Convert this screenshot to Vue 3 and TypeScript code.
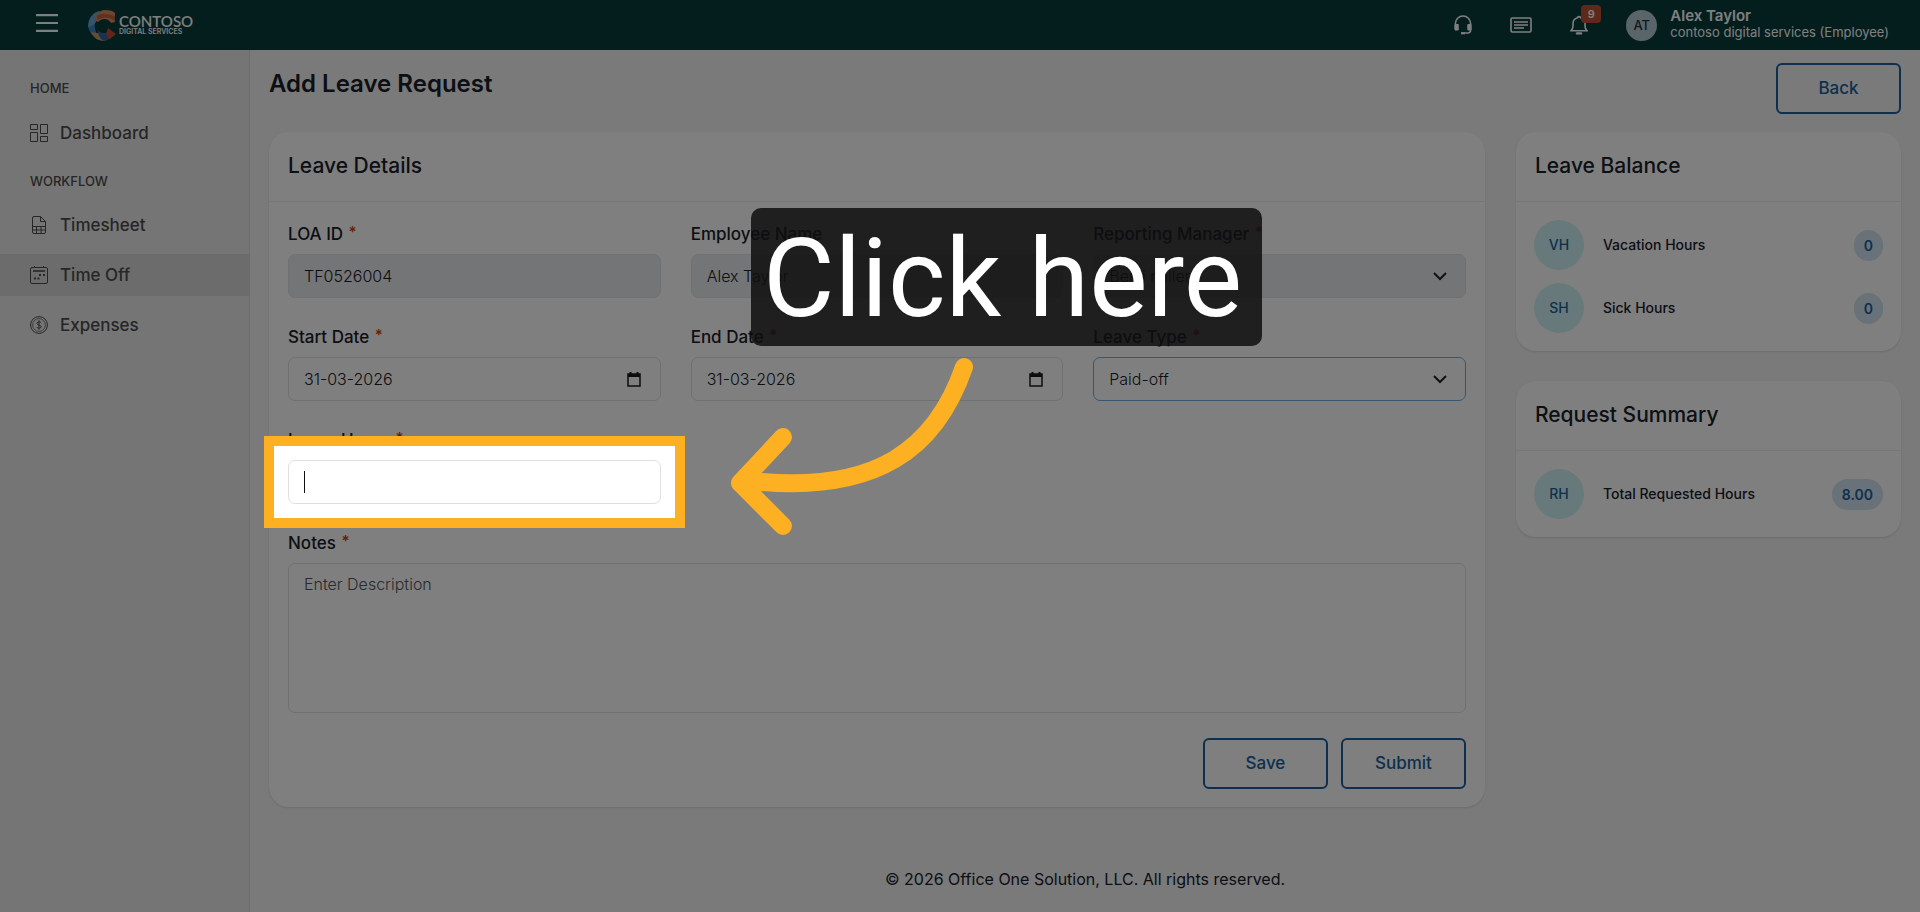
<script setup lang="ts">
import { ref } from 'vue'

interface BalanceRow {
  initials: string
  label: string
  value: string
}

interface SummaryCard {
  title: string
  rows: BalanceRow[]
}

const loaId = ref('TF0526004')
const employee = ref('Alex Taylor')
const startDate = ref('31-03-2026')
const endDate = ref('31-03-2026')
const leaveHours = ref('')
const notes = ref('')

const cards: SummaryCard[] = [
  {
    title: 'Leave Balance',
    rows: [
      { initials: 'VH', label: 'Vacation Hours', value: '0' },
      { initials: 'SH', label: 'Sick Hours', value: '0' },
    ],
  },
  {
    title: 'Request Summary',
    rows: [{ initials: 'RH', label: 'Total Requested Hours', value: '8.00' }],
  },
]
</script>

<template>
  <div class="page">
    <header class="topbar">
      <button class="icon-btn menu" type="button" aria-label="Toggle menu">
        <svg width="22" height="18" viewBox="0 0 22 18"><path d="M0 1.2h22M0 9h22M0 16.8h22" stroke="#fff" stroke-width="2.2" /></svg>
      </button>
      <a class="brand" href="#">
        <svg width="28" height="31" viewBox="0 0 28 31" aria-hidden="true">
          <path d="M12 1C3 3 0 10 0 16c1 6 4 9 8 12 2-2 1-4 0-6-2-6-1-9 0-12 0-4 2-7 4-9z" fill="#3f86c4" />
          <path d="M1 12C3 5 7 2 12 1 9 4 7 8 8 12c-2 3-4 4-8 5z" fill="#6fa5d2" />
          <path d="M8 11C7 5 11 0 17 0c5 0 8 1 10 3v9l-4 1c-3-5-9-5-13-1z" fill="#d98c5f" />
          <path d="M9 6c4-4 11-2 18 0v5c-6-5-12-4-18-1z" fill="#bf6240" />
          <path d="M3 22c6 1 9 2 15 1l4 5-5 3C11 31 6 29 3 22z" fill="#c99874" />
          <path d="M10 20c3 4 7 4 11 1l1 8-6 2c-4-2-6-6-6-11z" fill="#39639e" />
          <path d="M20 18l8 6-6 5-4-4z" fill="#c64b32" />
        </svg>
        <span class="brand-text">
          <span class="brand-name">CONTOSO</span>
          <span class="brand-sub">DIGITAL SERVICES</span>
        </span>
      </a>
      <div class="top-actions">
        <button class="icon-btn" type="button" aria-label="Support">
          <svg width="18" height="20" viewBox="0 0 18 20" fill="none" stroke="#fff" stroke-width="1.6">
            <path d="M1.4 14V8.6a7.6 7.6 0 0 1 15.2 0V15c0 2-1 3-3 3h-3" />
            <path d="M1 9.5h3.2V15H1zM13.8 9.5H17V15h-3.2z" fill="#fff" stroke-width="1" />
            <path d="M7 18.2h4" stroke-width="2.2" />
          </svg>
        </button>
        <button class="icon-btn" type="button" aria-label="News">
          <svg width="22" height="16" viewBox="0 0 22 16" fill="none" stroke="#fff" stroke-width="1.6">
            <rect x="1" y="1" width="20" height="14" rx="1.2" />
            <path d="M4 5h14M4 8h14M4 11h10" />
          </svg>
        </button>
        <button class="icon-btn bell" type="button" aria-label="Notifications">
          <svg width="18" height="20" viewBox="0 0 18 20" fill="none" stroke="#fff" stroke-width="1.6">
            <path d="M1 15.8h16c-1.6-1.3-2-2.8-2-5V8.4a6 6 0 0 0-4.4-5.6c-.2-1.6-3-1.6-3.2 0A6 6 0 0 0 3 8.4v2.4c0 2.2-.4 3.7-2 5z" />
            <path d="M7 18.4h4" stroke-width="2.4" stroke-linecap="round" />
          </svg>
          <span class="bell-count">9</span>
        </button>
        <span class="avatar">AT</span>
        <div class="user">
          <strong>Alex Taylor</strong>
          <span>contoso digital services (Employee)</span>
        </div>
      </div>
    </header>

    <div class="body">
      <nav class="sidebar" aria-label="Main">
        <p class="nav-title">HOME</p>
        <a class="nav-item" href="#">
          <svg width="18" height="18" viewBox="0 0 18 18"><path d="M.5.5h7v5h-7zM.5 8.5h7v9h-7zM10.5.5h7v9h-7zM10.5 12.5h7v5h-7z" /></svg>
          Dashboard
        </a>
        <p class="nav-title">WORKFLOW</p>
        <a class="nav-item" href="#">
          <svg width="18" height="18" viewBox="0 0 18 18"><path d="M2.5 2A1.5 1.5 0 0 1 4 .5h6.5l5 5V16a1.5 1.5 0 0 1-1.500 1.500H4A1.500 1.500 0 0 1 2.500 16zM10.500.5v5h5M2.500 10.500h13M2.500 14h13M6.500 10.500v7M11 10.500v7" /></svg>
          Timesheet
        </a>
        <a class="nav-item active" href="#">
          <svg width="18" height="18" viewBox="0 0 18 18">
            <rect x=".5" y="1.5" width="17" height="16" rx="1.5" />
            <path d="M4.5 0v2M13.5 0v2" /><path d="M3 5h12" stroke-width="1.6" />
            <path d="M9 9h2M13 9h2M4 12.5h2M7.5 12.5h2" stroke-width="1.8" />
          </svg>
          Time Off
        </a>
        <a class="nav-item" href="#">
          <svg width="18" height="18" viewBox="0 0 18 18">
            <circle cx="9" cy="9" r="8.4" /><circle cx="9" cy="9" r="6.4" stroke-width=".7" />
            <path d="M11.3 6.9C11 5.6 7 5.3 6.9 7.3 6.800 9.300 11.200 8.700 11.200 10.800 11.200 12.700 7 12.600 6.700 11M9 4.300v9.400" />
          </svg>
          Expenses
        </a>
      </nav>

      <main class="main">
        <div class="title-row">
          <h1>Add Leave Request</h1>
          <button class="btn" type="button">Back</button>
        </div>

        <div class="columns">
          <form class="card" @submit.prevent>
            <h2>Leave Details</h2>
            <div class="card-body">
              <div class="fields">
                <div class="field">
                  <label for="loa">LOA ID <sup>*</sup></label>
                  <div class="control disabled"><input id="loa" v-model="loaId" type="text" disabled /></div>
                </div>
                <div class="field">
                  <label for="emp">Employee Name</label>
                  <div class="control disabled"><input id="emp" v-model="employee" type="text" disabled /></div>
                </div>
                <div class="field">
                  <label for="mgr">Reporting Manager <sup>*</sup></label>
                  <div class="control disabled">
                    <select id="mgr" disabled><option>Benji miller</option></select>
                    <svg class="chevron" width="14" height="9" viewBox="0 0 14 9"><path d="M1 1l6 6 6-6" /></svg>
                  </div>
                </div>
                <div class="field">
                  <label for="start">Start Date <sup>*</sup></label>
                  <div class="control">
                    <input id="start" v-model="startDate" type="text" />
                    <button class="icon-btn" type="button" aria-label="Choose start date">
                      <svg width="14" height="15" viewBox="0 0 14 15"><path d="M1 2h12v12H1z" fill="none" stroke="#1b1b1b" stroke-width="1.5" /><path d="M1 2h12v3H1zM2.5 0h2v2h-2zM9.5 0h2v2h-2z" fill="#1b1b1b" /></svg>
                    </button>
                  </div>
                </div>
                <div class="field">
                  <label for="end">End Date <sup>*</sup></label>
                  <div class="control">
                    <input id="end" v-model="endDate" type="text" />
                    <button class="icon-btn" type="button" aria-label="Choose end date">
                      <svg width="14" height="15" viewBox="0 0 14 15"><path d="M1 2h12v12H1z" fill="none" stroke="#1b1b1b" stroke-width="1.5" /><path d="M1 2h12v3H1zM2.5 0h2v2h-2zM9.5 0h2v2h-2z" fill="#1b1b1b" /></svg>
                    </button>
                  </div>
                </div>
                <div class="field">
                  <label for="type">Leave Type <sup>*</sup></label>
                  <div class="control selected">
                    <select id="type"><option>Paid-off</option></select>
                    <svg class="chevron" width="14" height="9" viewBox="0 0 14 9"><path d="M1 1l6 6 6-6" /></svg>
                  </div>
                </div>
                <div class="field">
                  <label for="hours">Leave Hours <sup>*</sup></label>
                  <div class="control">
                    <span class="caret"></span>
                    <input id="hours" v-model="leaveHours" type="text" />
                    <div class="spotlight"></div>
                    <div class="callout">Click here</div>
                    <svg class="arrow" width="246" height="180" viewBox="0 0 246 180" aria-hidden="true">
                      <path d="M234 11C205 95 145 135 32 126L10 127M53 81L10 127 53 170" />
                    </svg>
                  </div>
                </div>
                <div class="field wide">
                  <label for="notes">Notes <sup>*</sup></label>
                  <textarea id="notes" v-model="notes" placeholder="Enter Description"></textarea>
                </div>
              </div>
              <div class="form-actions">
                <button class="btn" type="button">Save</button>
                <button class="btn" type="submit">Submit</button>
              </div>
            </div>
          </form>

          <aside class="side">
            <section v-for="card in cards" :key="card.title" class="card">
              <h2>{{ card.title }}</h2>
              <ul class="rows">
                <li v-for="row in card.rows" :key="row.label">
                  <span class="initials">{{ row.initials }}</span>
                  <span class="row-label">{{ row.label }}</span>
                  <span class="pill">{{ row.value }}</span>
                </li>
              </ul>
            </section>
          </aside>
        </div>

        <footer>© 2026 Office One Solution, LLC. All rights reserved.</footer>
      </main>
    </div>
  </div>
</template>

<style>
body {
  margin: 0;
}
</style>

<style scoped>
.page,
.page * {
  box-sizing: border-box;
}
.page {
  position: relative;
  overflow: hidden;
  display: flex;
  flex-direction: column;
  min-height: 100vh;
  background: #f4f4f4;
  color: #18202a;
  font: 400 16px/24px Inter, "Liberation Sans", sans-serif;
}
button,
input,
select,
textarea {
  font: inherit;
  color: inherit;
}
.icon-btn {
  display: flex;
  padding: 0;
  border: 0;
  background: none;
}
.topbar {
  display: flex;
  align-items: center;
  height: 50px;
  padding: 0 31px 0 36px;
  background: #063c3b;
  color: #fff;
}
.menu {
  margin-bottom: 4px;
}
.brand {
  display: flex;
  align-items: center;
  gap: 3px;
  margin-left: 30px;
  color: #fff;
  text-decoration: none;
}
.brand-text {
  display: flex;
  flex-direction: column;
}
.brand-name {
  font: 600 15px/14px Lato, sans-serif;
}
.brand-sub {
  font: 600 7px/8px Inter, sans-serif;
}
.top-actions {
  display: flex;
  align-items: center;
  margin-left: auto;
}
.top-actions .icon-btn {
  margin-right: 38px;
}
.bell {
  position: relative;
}
.bell-count {
  position: absolute;
  left: 11px;
  top: -10px;
  width: 20px;
  height: 18px;
  border-radius: 4px;
  background: #bc5230;
  font: 600 11px/18px Inter, sans-serif;
  text-align: center;
}
.avatar {
  width: 31px;
  height: 31px;
  border-radius: 50%;
  background: #b4cbd5;
  color: #25323c;
  font: 500 13px/31px Inter, sans-serif;
  text-align: center;
}
.user {
  display: flex;
  flex-direction: column;
  margin-left: 13px;
  padding-bottom: 2px;
  font-size: 13px;
  line-height: 16px;
}
.user strong {
  font-size: 15px;
  font-weight: 600;
}
.body {
  flex: 1;
  display: flex;
}
.sidebar {
  flex: 0 0 250px;
  padding-top: 26px;
  border-right: 1px solid #d8d8d8;
  background: #ebebeb;
  color: #4c4c4e;
}
.nav-title {
  margin: 0 0 11px 30px;
  font-size: 13px;
  font-weight: 500;
  line-height: 25px;
}
.nav-item + .nav-title {
  margin-top: 15px;
  margin-bottom: 10px;
}
.nav-item {
  display: flex;
  align-items: center;
  gap: 12px;
  height: 42px;
  padding-left: 30px;
  color: inherit;
  font-size: 17px;
  font-weight: 500;
  text-decoration: none;
}
.nav-item + .nav-item {
  margin-top: 8px;
}
.nav-item svg {
  fill: none;
  stroke: currentColor;
}
.active {
  background: #d9d9d9;
}
.main {
  flex: 1;
  min-width: 0;
  display: flex;
  flex-direction: column;
  padding: 13px 19px 0;
}
.title-row {
  display: flex;
  justify-content: space-between;
  align-items: flex-start;
  margin-bottom: 18px;
}
h1 {
  margin: 0;
  font-size: 24px;
  font-weight: 600;
  line-height: 42px;
}
.btn {
  min-width: 125px;
  height: 51px;
  padding: 0 16px 2px;
  border: 2px solid #1b609c;
  border-radius: 6px;
  background: transparent;
  color: #1b609c;
  font-size: 17px;
  font-weight: 500;
}
.columns {
  display: grid;
  grid-template-columns: minmax(0, 60fr) minmax(0, 19fr);
  align-items: start;
  gap: 31px;
}
.card {
  border-radius: 20px;
  background: #fff;
  box-shadow: 0 1px 2px rgba(0, 0, 0, 0.12);
}
h2 {
  margin: 0;
  padding: 21px 19px 22px;
  border-bottom: 1px solid #f0f0f0;
  font-size: 21px;
  font-weight: 500;
  line-height: 26px;
}
.card-body {
  padding: 19px 19px 18px;
}
.fields {
  display: grid;
  grid-template-columns: repeat(3, minmax(0, 1fr));
  gap: 26px 30px;
}
.field {
  display: flex;
  flex-direction: column;
  gap: 9px;
}
.wide {
  grid-column: 1 / -1;
}
label {
  height: 24px;
  font-size: 17px;
  font-weight: 500;
  line-height: 26px;
  white-space: nowrap;
}
sup {
  margin-left: 1px;
  color: #c8430f;
  font-size: 15px;
  font-weight: 600;
  line-height: 0;
  vertical-align: 3px;
}
.control {
  position: relative;
  display: flex;
  align-items: center;
  height: 44px;
  padding: 0 18px 0 15px;
  border: 1px solid #dfe0e2;
  border-radius: 7px;
  background: #fff;
}
.disabled {
  border-color: #e0e3e5;
  background: #e7eaec;
}
.selected {
  border-color: #72abdf;
}
.control input,
.control select {
  flex: 1;
  min-width: 0;
  width: 100%;
  height: 100%;
  padding: 0;
  border: 0;
  outline: 0;
  background: none;
  color: inherit;
  font-weight: 300;
  opacity: 1;
  appearance: none;
}
.control .icon-btn {
  margin-right: 1px;
}
.chevron {
  fill: none;
  stroke: #222;
  stroke-width: 2;
}
.caret {
  width: 1px;
  height: 22px;
  background: #111;
}
textarea {
  display: block;
  width: 100%;
  height: 150px;
  padding: 8px 15px;
  border: 1px solid #dfe0e2;
  border-radius: 7px;
  outline: 0;
  background: #fff;
  font-weight: 300;
  resize: none;
}
textarea::placeholder {
  color: #505459;
  opacity: 1;
}
.form-actions {
  display: flex;
  justify-content: flex-end;
  gap: 13px;
  margin-top: 25px;
}
.side {
  display: grid;
  gap: 30px;
}
.rows {
  display: grid;
  gap: 13px;
  margin: 0;
  padding: 18px;
  list-style: none;
}
.rows li {
  display: flex;
  align-items: center;
}
.initials {
  width: 50px;
  height: 50px;
  border-radius: 50%;
  background: #cef2f5;
  color: #1b609c;
  font-size: 14px;
  font-weight: 500;
  line-height: 50px;
  text-align: center;
}
.row-label {
  margin: 0 auto 0 19px;
  font-size: 14px;
  font-weight: 500;
}
.pill {
  padding: 0 10px;
  border-radius: 16px;
  background: #d3e4f3;
  color: #1b609c;
  font-size: 14px;
  font-weight: 600;
  line-height: 31px;
}
footer {
  margin-top: auto;
  padding: 21px 0;
  text-align: center;
}
/* Guided-tour layer: everything outside the highlighted control is dimmed. */
.spotlight {
  position: absolute;
  z-index: 5;
  inset: -25px;
  border: 10px solid #fdb022;
  box-shadow: 0 0 0 9999px rgba(0, 0, 0, 0.5);
  pointer-events: none;
}
.callout {
  position: absolute;
  z-index: 6;
  left: 462px;
  bottom: 157px;
  width: 511px;
  height: 138px;
  padding-right: 8px;
  border-radius: 10px;
  background: rgba(14, 14, 14, 0.85);
  color: #fff;
  font: 400 110px/142px Roboto, sans-serif;
  text-align: center;
  white-space: nowrap;
}
.arrow {
  position: absolute;
  z-index: 6;
  left: 441px;
  bottom: -33px;
  fill: none;
  stroke: #fdb022;
  stroke-width: 18;
  stroke-linecap: round;
  stroke-linejoin: round;
}
</style>
